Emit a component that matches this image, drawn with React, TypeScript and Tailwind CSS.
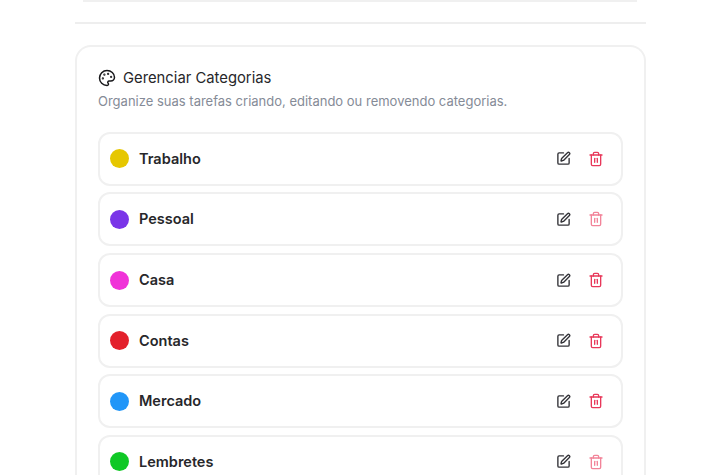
import React from 'react';
import { Palette, SquarePen, Trash2 } from 'lucide-react';

const categories = [
  { name: 'Trabalho', color: 'bg-[#e6c700]', faded: false },
  { name: 'Pessoal', color: 'bg-[#7a35e8]', faded: true },
  { name: 'Casa', color: 'bg-[#f032d8]', faded: false },
  { name: 'Contas', color: 'bg-[#e3202c]', faded: false },
  { name: 'Mercado', color: 'bg-[#2196f8]', faded: false },
  { name: 'Lembretes', color: 'bg-[#10c826]', faded: true },
];

const CategoryRow: React.FC<{ name: string; color: string; faded: boolean }> = ({ name, color, faded }) => {
  return (
    <div className="flex h-[54px] shrink-0 items-center justify-between rounded-[12px] border-2 border-[#f0f0f0] bg-white pl-[10px] pr-[17px]">
      <div className="flex items-center gap-[10px]">
        <span className={`h-[19px] w-[19px] rounded-full ${color}`} />
        <span className="text-[14.5px] font-semibold text-[#27272a]">{name}</span>
      </div>
      <div className="flex items-center gap-[17px]">
        <SquarePen size={15} strokeWidth={2.2} className="text-[#333338]" />
        <Trash2 size={16} className={faded ? 'text-[#f28499]' : 'text-[#e8385a]'} />
      </div>
    </div>
  );
};

const App: React.FC = () => {
  return (
    <div className="h-[475px] w-[712px] overflow-hidden bg-white font-['Inter',sans-serif]">
      <div className="ml-[83px] w-[554px] border-b-2 border-[#f0f0f0]" />
      <div className="ml-[75px] mt-[20px] w-[571px] border-t-2 border-[#eeeeee]" />
      <div className="ml-[75px] mt-[21px] w-[571px] rounded-t-[16px] border-2 border-b-0 border-[#f0f0f0] px-[21px] pt-[20px]">
        <div className="flex items-center gap-[7px]">
          <Palette size={18} className="text-[#18181b]" />
          <h2 className="text-[14.8px] font-normal text-[#27272a]">Gerenciar Categorias</h2>
        </div>
        <p className="mt-[3px] text-[13px] text-[#858b97]">Organize suas tarefas criando, editando ou removendo categorias.</p>
        <div className="mt-[20px] flex flex-col gap-[6.67px]">
          {categories.map((c) => (
            <CategoryRow key={c.name} {...c} />
          ))}
        </div>
      </div>
    </div>
  );
};

export default App;
